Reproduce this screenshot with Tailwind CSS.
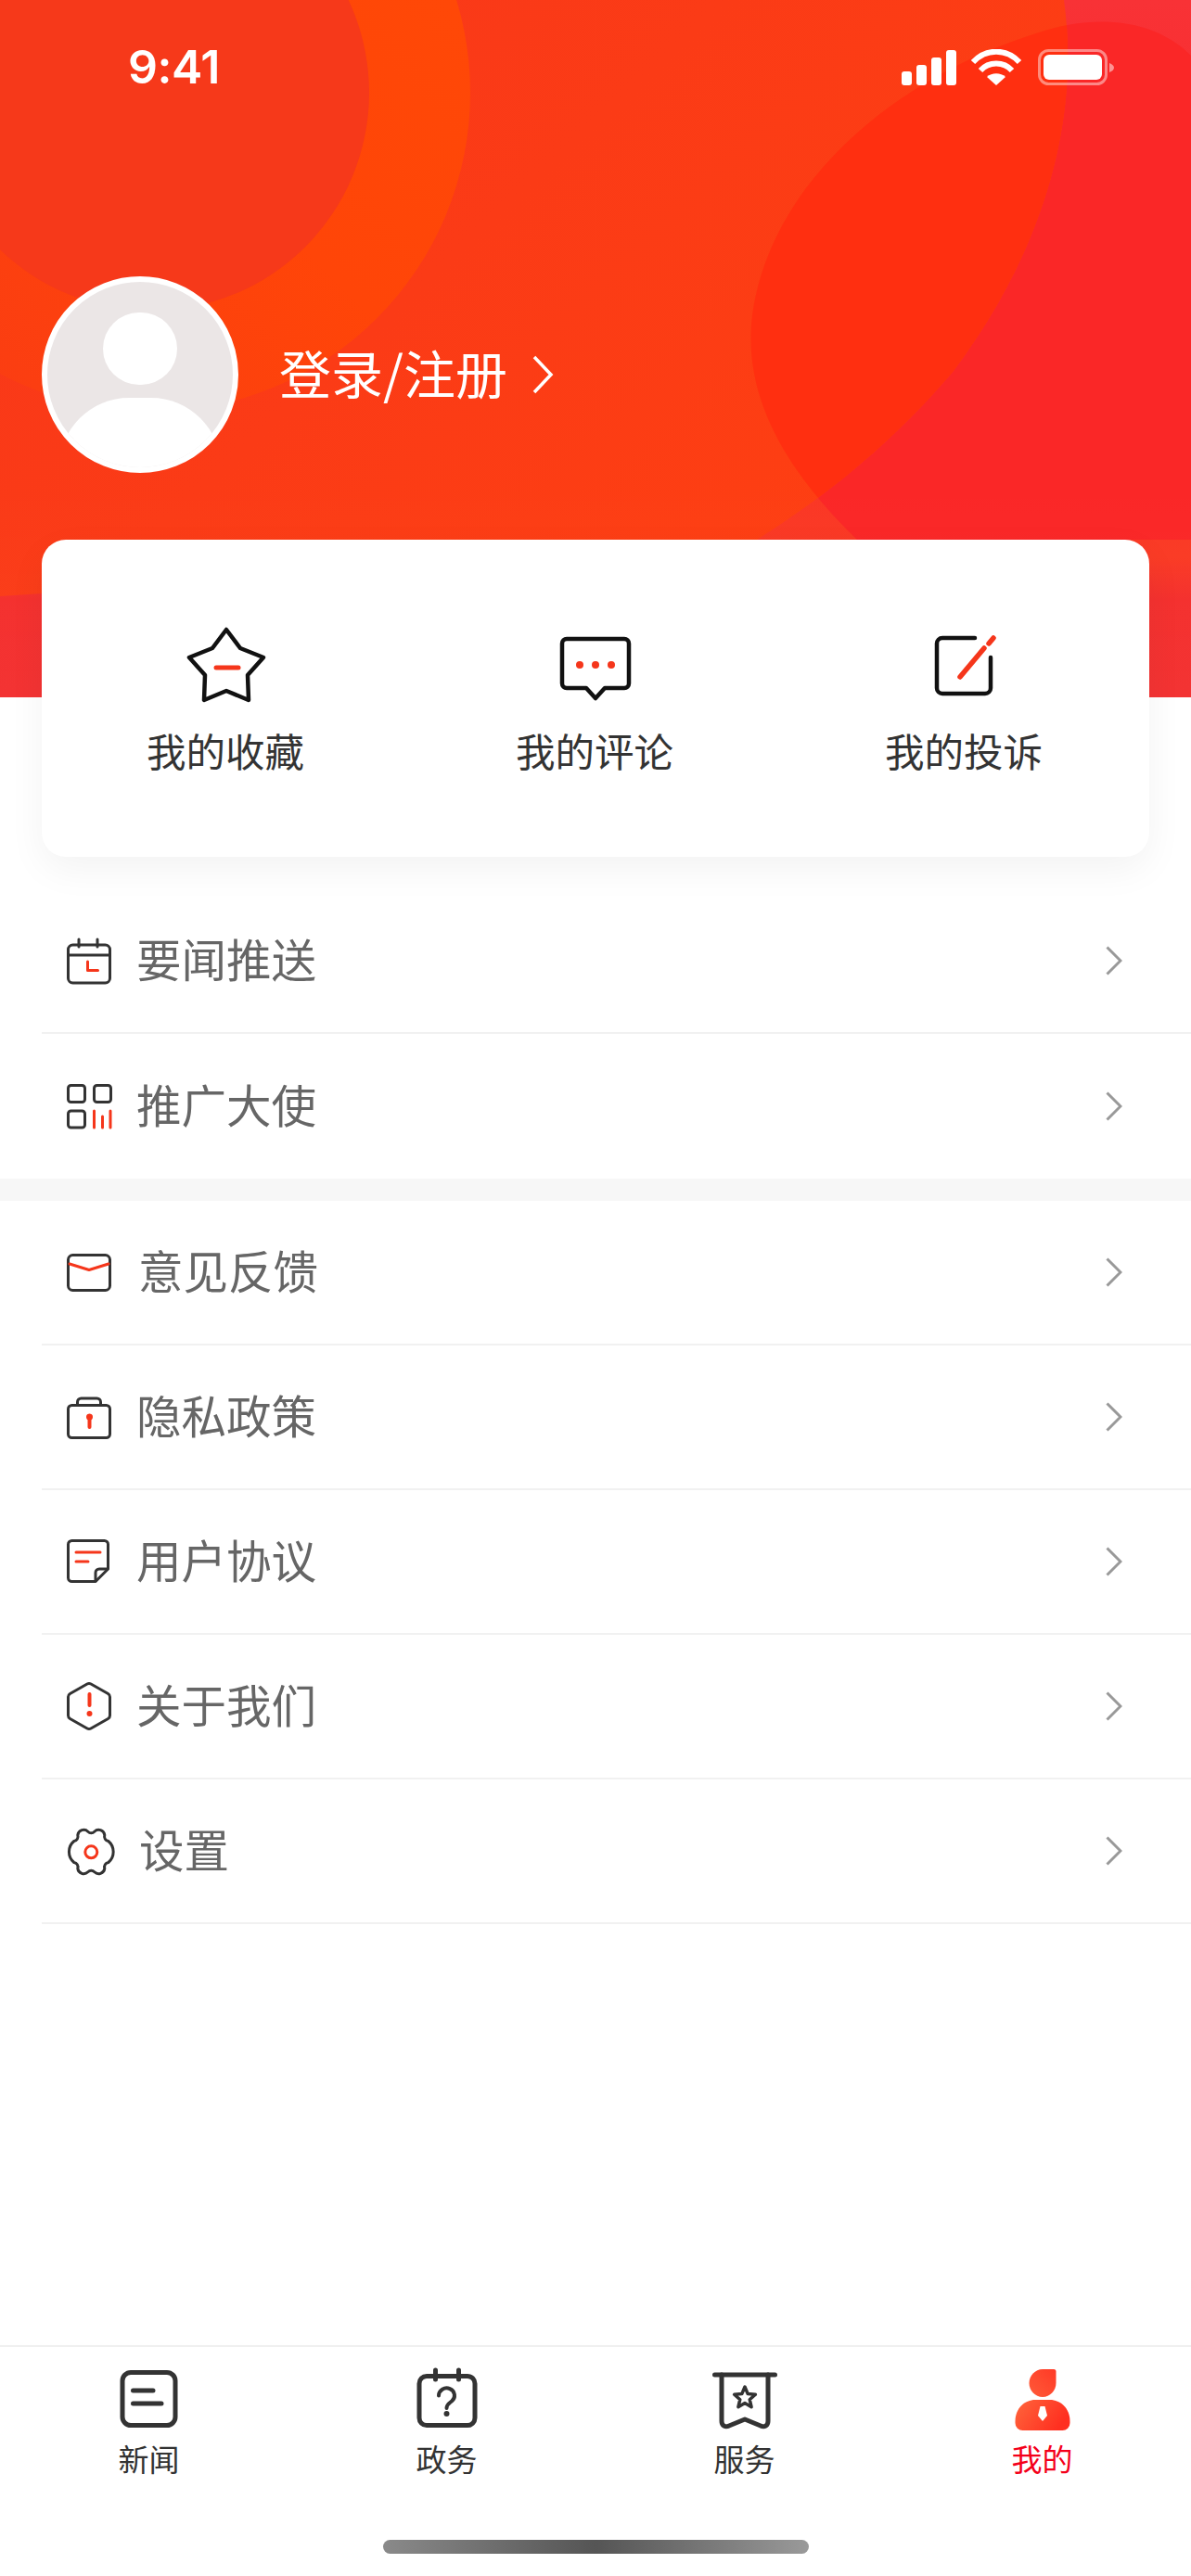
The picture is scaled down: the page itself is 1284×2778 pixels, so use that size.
<!DOCTYPE html>
<html lang="zh-CN">

<head>
    <meta charset="UTF-8">
    <meta name="viewport" content="width=device-width, initial-scale=1.0">
    <title>我的</title>
    <script src="https://cdn.jsdelivr.net/npm/@tailwindcss/browser@4"></script>
</head>

<body class="bg-white font-['Noto_Sans_CJK_SC','Liberation_Sans',sans-serif]">
    <div class="w-[1284px] h-[2778px] flex flex-col overflow-hidden">

        <!-- header -->
        <header class="relative h-[752px] shrink-0 overflow-hidden bg-[#f7302c] text-white">
            <svg class="absolute inset-0" width="1284" height="752" viewBox="0 0 1284 752">
                <defs>
                    <linearGradient id="bigFill" x1="0" y1="0" x2="1" y2="0.6">
                        <stop offset="0" stop-color="#f8371a" />
                        <stop offset="1" stop-color="#fe3f12" />
                    </linearGradient>
                    <linearGradient id="ringFill" x1="1" y1="0" x2="0" y2="1">
                        <stop offset="0" stop-color="#ff4a06" />
                        <stop offset="0.5" stop-color="#ff4508" />
                        <stop offset="1" stop-color="#f93a16" />
                    </linearGradient>
                    <linearGradient id="baseFill" x1="0" y1="0" x2="0" y2="1">
                        <stop offset="0" stop-color="#f83236" />
                        <stop offset="0.4" stop-color="#fb2a28" />
                        <stop offset="0.8" stop-color="#fa3a24" />
                        <stop offset="0.86" stop-color="#f42e2c" />
                        <stop offset="1" stop-color="#f32d2d" />
                    </linearGradient>
                    <linearGradient id="fade" x1="0" y1="0" x2="0" y2="1">
                        <stop offset="0" stop-color="#ffffff" stop-opacity="0" />
                        <stop offset="1" stop-color="#ffffff" stop-opacity="0.03" />
                    </linearGradient>
                    <clipPath id="bigClip">
                        <path d="M1147 0C1165 130 1125 270 1028 400C960 480 890 535 816 582L740 640H45L0 643V0Z" />
                    </clipPath>
                </defs>
                <rect width="1284" height="752" fill="url(#baseFill)" />
                <path d="M924 582C850 510 800 430 811 340C830 200 960 85 1120 35C1190 12 1250 25 1284 60V582Z" fill="#fa2727" />
                <path d="M1147 0C1165 130 1125 270 1028 400C960 480 890 535 816 582L740 640H45L0 643V0Z" fill="url(#bigFill)" />
                <g clip-path="url(#bigClip)">
                    <path d="M924 582C850 510 800 430 811 340C830 200 960 85 1120 35C1190 12 1250 25 1284 60V582Z" fill="#ff2f10" />
                </g>
                <path d="M0 0H120L0 330Z" fill="#ff3a20" />
                <circle cx="163" cy="100" r="344" fill="url(#ringFill)" />
                <circle cx="163" cy="100" r="235" fill="#f6391a" />
                <rect y="520" width="1284" height="232" fill="url(#fade)" />
            </svg>

            <div class="relative flex items-start justify-between pl-[138px] pr-[82px] pt-[41px]">
                <span class="font-['Inter',sans-serif] font-semibold text-[50px] leading-[62px] tracking-[-0.5px]">9:41</span>
                <svg class="mt-[12px]" width="230" height="40" viewBox="0 0 230 40" fill="#fff">
                    <rect x="0" y="24" width="11" height="15" rx="3" />
                    <rect x="16" y="17" width="11" height="22" rx="3" />
                    <rect x="32" y="9" width="11" height="30" rx="3" />
                    <rect x="48" y="1" width="11" height="38" rx="3" />
                    <path d="M77 14C91 -1 113 -1 127 14" fill="none" stroke="#fff" stroke-width="6" stroke-linejoin="round" />
                    <path d="M85 23C94 13 110 13 119 23" fill="none" stroke="#fff" stroke-width="6" />
                    <path d="M92 30C97 25 107 25 112 30L102 39Z" />
                    <rect x="148.5" y="1.5" width="72" height="36" rx="10" fill="none" stroke="#fff" stroke-opacity="0.45" stroke-width="3" />
                    <rect x="153" y="6" width="63" height="27" rx="6" />
                    <path d="M224 15C227 16 229 18 229 20C229 22 227 24 224 25Z" fill-opacity="0.5" />
                </svg>
            </div>

            <div class="relative flex items-center pl-[45px] mt-[195px]">
                <div class="relative w-[212px] h-[212px] rounded-full border-[6px] border-white bg-[#ebe6e6] overflow-hidden">
                    <div class="absolute left-[60px] top-[33px] w-[80px] h-[78px] rounded-full bg-white"></div>
                    <div class="absolute left-[13px] top-[125px] w-[174px] h-[150px] rounded-full bg-white"></div>
                </div>
                <span class="ml-[44px] mb-[6px] text-[56px] leading-[72px] text-white">登录/注册</span>
                <svg class="ml-[26px]" width="24" height="42" viewBox="0 0 24 42" fill="none" stroke="#fff" stroke-width="3.5">
                    <path d="M3 2L21 21L3 40" />
                </svg>
            </div>
        </header>

        <!-- shortcuts card -->
        <section class="relative mx-[45px] -mt-[170px] h-[342px] shrink-0 rounded-[26px] bg-white shadow-[0_14px_40px_rgba(0,0,0,0.05)] pt-[93px] grid grid-cols-3">
            <a class="flex flex-col items-center">
                <svg width="88" height="84" viewBox="200 675 88 84" fill="none" stroke="#111" stroke-width="4.5" stroke-linejoin="round" stroke-linecap="round">
                    <path d="M244 679L259 699L284 709L267 728L268 755L244 745L220 755L221 728L204 709L229 699Z" />
                    <path d="M233 720H257" stroke="#f5361b" stroke-width="5" />
                </svg>
                <span class="mt-[22px] -ml-[2px] text-[42.5px] leading-[56px] text-[#333]">我的收藏</span>
            </a>
            <a class="flex flex-col items-center">
                <svg width="88" height="84" viewBox="598 675 88 84" fill="none" stroke="#111" stroke-width="4.5" stroke-linejoin="round">
                    <path d="M611 689H673A5 5 0 0 1 678 694V737A5 5 0 0 1 673 742H652L642 753L632 742H611A5 5 0 0 1 606 737V694A5 5 0 0 1 611 689Z" />
                    <g fill="#f5361b" stroke="none">
                        <circle cx="625" cy="717" r="4" />
                        <circle cx="642" cy="717" r="4" />
                        <circle cx="659" cy="717" r="4" />
                    </g>
                </svg>
                <span class="mt-[22px] -ml-[2px] text-[42.5px] leading-[56px] text-[#333]">我的评论</span>
            </a>
            <a class="flex flex-col items-center">
                <svg width="88" height="84" viewBox="995 675 88 84" fill="none" stroke="#111" stroke-width="4.5" stroke-linecap="round">
                    <path d="M1050 688H1015A6 6 0 0 0 1009 694V742A6 6 0 0 0 1015 748H1061A6 6 0 0 0 1067 742V709" />
                    <path d="M1034 730L1060 699M1065 694L1070 688" stroke="#f5361b" stroke-width="5.5" />
                </svg>
                <span class="mt-[22px] -ml-[2px] text-[42.5px] leading-[56px] text-[#333]">我的投诉</span>
            </a>
        </section>

        <!-- menu -->
        <ul class="mt-[34px] shrink-0">
            <li class="ml-[45px] h-[157px] flex items-center pl-[27px] pr-[74px] border-b-2 border-[#f1f1f1]">
                <svg class="w-[48px] h-[52px] overflow-visible" viewBox="0 0 48 52" fill="none" stroke="#333" stroke-width="3" stroke-linecap="round" stroke-linejoin="round">
                    <rect x="1.5" y="9" width="45" height="41" rx="5" />
                    <path d="M1.5 20H46.5M13 3V11M33 3V11" />
                    <path d="M22.5 27V36.5H33.5" stroke="#f5361b" />
                </svg>
                <span class="ml-[27px] mb-[6px] flex-1 text-[48.5px] leading-[60px] text-[#666]">要闻推送</span>
                <svg width="18" height="32" viewBox="0 0 18 32" fill="none" stroke="#999" stroke-width="3"><path d="M1.5 1.5L16 16L1.5 30.5" /></svg>
            </li>
            <li class="ml-[45px] h-[156px] flex items-center pl-[27px] pr-[74px]">
                <svg class="w-[48px] h-[52px] overflow-visible" viewBox="0 0 48 52" fill="none" stroke="#333" stroke-width="3" stroke-linecap="round" stroke-linejoin="round">
                    <rect x="1.5" y="3.5" width="18" height="18" rx="3" />
                    <rect x="29.5" y="3.5" width="18" height="18" rx="3" />
                    <rect x="1.5" y="31" width="18" height="18" rx="3" />
                    <path d="M29.5 31V49M38.5 37V49M47 31V49" stroke="#f5361b" />
                </svg>
                <span class="ml-[27px] mb-[6px] flex-1 text-[48.5px] leading-[60px] text-[#666]">推广大使</span>
                <svg width="18" height="32" viewBox="0 0 18 32" fill="none" stroke="#999" stroke-width="3"><path d="M1.5 1.5L16 16L1.5 30.5" /></svg>
            </li>
        </ul>

        <div class="h-[24px] shrink-0 bg-[#f7f7f7]"></div>

        <ul class="shrink-0">
            <li class="ml-[45px] h-[156px] flex items-center pl-[27px] pr-[74px] border-b-2 border-[#f1f1f1]">
                <svg class="w-[48px] h-[52px] overflow-visible" viewBox="0 0 48 52" fill="none" stroke="#333" stroke-width="3" stroke-linecap="round" stroke-linejoin="round">
                    <rect x="1.5" y="7.5" width="45" height="38" rx="5" />
                    <path d="M3 17L24 23.5L45 17" stroke="#f5361b" />
                </svg>
                <span class="ml-[29px] mb-[6px] flex-1 text-[48.5px] leading-[60px] text-[#666]">意见反馈</span>
                <svg width="18" height="32" viewBox="0 0 18 32" fill="none" stroke="#999" stroke-width="3"><path d="M1.5 1.5L16 16L1.5 30.5" /></svg>
            </li>
            <li class="ml-[45px] h-[156px] flex items-center pl-[27px] pr-[74px] border-b-2 border-[#f1f1f1]">
                <svg class="w-[48px] h-[52px] overflow-visible" viewBox="0 0 48 52" fill="none" stroke="#333" stroke-width="3" stroke-linecap="round" stroke-linejoin="round">
                    <rect x="1.5" y="13.5" width="45" height="35" rx="4" />
                    <path d="M11.5 13V10A4 4 0 0 1 15.5 6H32.5A4 4 0 0 1 36.5 10V13" />
                    <circle cx="24.5" cy="26" r="3.5" fill="#f5361b" stroke="none" />
                    <path d="M24.5 27V37" stroke="#f5361b" stroke-width="4" />
                </svg>
                <span class="ml-[27px] mb-[6px] flex-1 text-[48.5px] leading-[60px] text-[#666]">隐私政策</span>
                <svg width="18" height="32" viewBox="0 0 18 32" fill="none" stroke="#999" stroke-width="3"><path d="M1.5 1.5L16 16L1.5 30.5" /></svg>
            </li>
            <li class="ml-[45px] h-[156px] flex items-center pl-[27px] pr-[74px] border-b-2 border-[#f1f1f1]">
                <svg class="w-[48px] h-[52px] overflow-visible" viewBox="0 0 48 52" fill="none" stroke="#333" stroke-width="3" stroke-linecap="round" stroke-linejoin="round">
                    <path d="M5.5 3.5H40.5A4 4 0 0 1 44.5 7.5V34L31 47.5H5.5A4 4 0 0 1 1.5 43.5V7.5A4 4 0 0 1 5.5 3.5Z" />
                    <path d="M31 47V38A4 4 0 0 1 35 34H44" />
                    <path d="M10 16H36M10 26H23" stroke="#f5361b" />
                </svg>
                <span class="ml-[27px] mb-[6px] flex-1 text-[48.5px] leading-[60px] text-[#666]">用户协议</span>
                <svg width="18" height="32" viewBox="0 0 18 32" fill="none" stroke="#999" stroke-width="3"><path d="M1.5 1.5L16 16L1.5 30.5" /></svg>
            </li>
            <li class="ml-[45px] h-[156px] flex items-center pl-[27px] pr-[74px] border-b-2 border-[#f1f1f1]">
                <svg class="w-[48px] h-[52px] overflow-visible" viewBox="0 0 48 52" fill="none" stroke="#333" stroke-width="3" stroke-linecap="round" stroke-linejoin="round">
                    <path d="M22 2L3.5 12.5A4 4 0 0 0 1.5 16V36A4 4 0 0 0 3.5 39.5L22 50A4 4 0 0 0 26 50L44.5 39.5A4 4 0 0 0 46.5 36V16A4 4 0 0 0 44.5 12.5L26 2A4 4 0 0 0 22 2Z" />
                    <path d="M24.5 13V25" stroke="#f5361b" stroke-width="4" />
                    <circle cx="24.5" cy="34" r="3" fill="#f5361b" stroke="none" />
                </svg>
                <span class="ml-[27px] mb-[6px] flex-1 text-[48.5px] leading-[60px] text-[#666]">关于我们</span>
                <svg width="18" height="32" viewBox="0 0 18 32" fill="none" stroke="#999" stroke-width="3"><path d="M1.5 1.5L16 16L1.5 30.5" /></svg>
            </li>
            <li class="ml-[45px] h-[156px] flex items-center pl-[27px] pr-[74px] border-b-2 border-[#f1f1f1]">
                <svg class="w-[48px] h-[52px] overflow-visible" viewBox="0 0 48 52" fill="none" stroke="#333" stroke-width="3" stroke-linecap="round" stroke-linejoin="round">
                    <path transform="translate(26.3 27)" d="M3.5 -21.8A6.5 6.5 0 0 1 14.5 -18A5 5 0 0 0 18.5 -11.5A15 15 0 0 1 18.5 11.5A5 5 0 0 0 14.5 18A6.5 6.5 0 0 1 3.5 21.8A5 5 0 0 0 -3.5 21.8A6.5 6.5 0 0 1 -14.5 18A5 5 0 0 0 -18.5 11.5A15 15 0 0 1 -18.5 -11.5A5 5 0 0 0 -14.5 -18A6.5 6.5 0 0 1 -3.5 -21.8A5 5 0 0 0 3.5 -21.8Z" />
                    <circle cx="26.3" cy="27.3" r="6.5" stroke="#f5361b" />
                </svg>
                <span class="ml-[30px] mb-[6px] flex-1 text-[48.5px] leading-[60px] text-[#666]">设置</span>
                <svg width="18" height="32" viewBox="0 0 18 32" fill="none" stroke="#999" stroke-width="3"><path d="M1.5 1.5L16 16L1.5 30.5" /></svg>
            </li>
        </ul>

        <!-- tab bar -->
        <nav class="relative mt-auto h-[249px] shrink-0 border-t-2 border-[#f0f0f0] pt-[20px] grid grid-cols-4 content-start">
            <a class="flex flex-col items-center">
                <svg width="72" height="72" viewBox="0 0 72 72" fill="none" stroke="#333" stroke-width="5" stroke-linecap="round" stroke-linejoin="round">
                    <rect x="7" y="7.5" width="57" height="57" rx="9" />
                    <path d="M18.5 27H40M18.5 41H49" />
                </svg>
                <span class="mt-[6px] text-[33px] leading-[44px] text-[#333]">新闻</span>
            </a>
            <a class="flex flex-col items-center">
                <svg width="72" height="72" viewBox="0 0 72 72" fill="none" stroke="#333" stroke-width="5" stroke-linecap="round" stroke-linejoin="round">
                    <rect x="6" y="11.5" width="60" height="53" rx="8" />
                    <path d="M23.5 5V15M48.5 5V15" />
                    <path d="M27 32.5A8.5 8 0 1 1 41 38.5C38 41 35.5 42 35.5 46" stroke-width="4" />
                    <circle cx="35.5" cy="52" r="3" fill="#333" stroke="none" />
                </svg>
                <span class="mt-[6px] text-[33px] leading-[44px] text-[#333]">政务</span>
            </a>
            <a class="flex flex-col items-center">
                <svg width="72" height="72" viewBox="0 0 72 72" fill="none" stroke="#333" stroke-width="5" stroke-linecap="round" stroke-linejoin="round">
                    <path d="M3.5 10H68.5" />
                    <path d="M11 10V60C11 65 15 67 19 65L36 58L53 65C57 67 61 65 61 60V10" />
                    <path d="M36 23L39.2 30.6L47.4 31.3L41.2 36.7L43.1 44.7L36 40.5L28.9 44.7L30.8 36.7L24.6 31.3L32.8 30.6Z" stroke-width="3.5" />
                </svg>
                <span class="mt-[6px] text-[33px] leading-[44px] text-[#333]">服务</span>
            </a>
            <a class="flex flex-col items-center">
                <svg width="72" height="72" viewBox="0 0 72 72">
                    <defs>
                        <linearGradient id="headFill" x1="0" y1="1" x2="1" y2="0">
                            <stop offset="0" stop-color="#ff5a38" />
                            <stop offset="1" stop-color="#ff3a26" />
                        </linearGradient>
                        <linearGradient id="bodyFill" x1="0" y1="0" x2="1" y2="0.4">
                            <stop offset="0" stop-color="#ff663c" />
                            <stop offset="1" stop-color="#ff2f20" />
                        </linearGradient>
                    </defs>
                    <path d="M21.5 19C21.5 11 28 4 36 4H48A2.5 2.5 0 0 1 50.5 6.5V19C50.5 27 44 34 36 34C28 34 21.5 27 21.5 19Z" fill="url(#headFill)" />
                    <path d="M6.5 60C6.5 46 17 37 28 37H44C55 37 65.5 46 65.5 60V62A8 8 0 0 1 57.5 70H14.5A8 8 0 0 1 6.5 62Z" fill="url(#bodyFill)" />
                    <path d="M33.5 44H38.5L41 54L36 60L31 54Z" fill="#fff" />
                </svg>
                <span class="mt-[6px] text-[33px] leading-[44px] text-[#f4001a]">我的</span>
            </a>
            <div class="absolute left-[413px] top-[208px] w-[459px] h-[15px] rounded-full bg-gradient-to-r from-[#8a8a8a] via-[#555] to-[#9a9a9a]"></div>
        </nav>
    </div>
</body>

</html>
